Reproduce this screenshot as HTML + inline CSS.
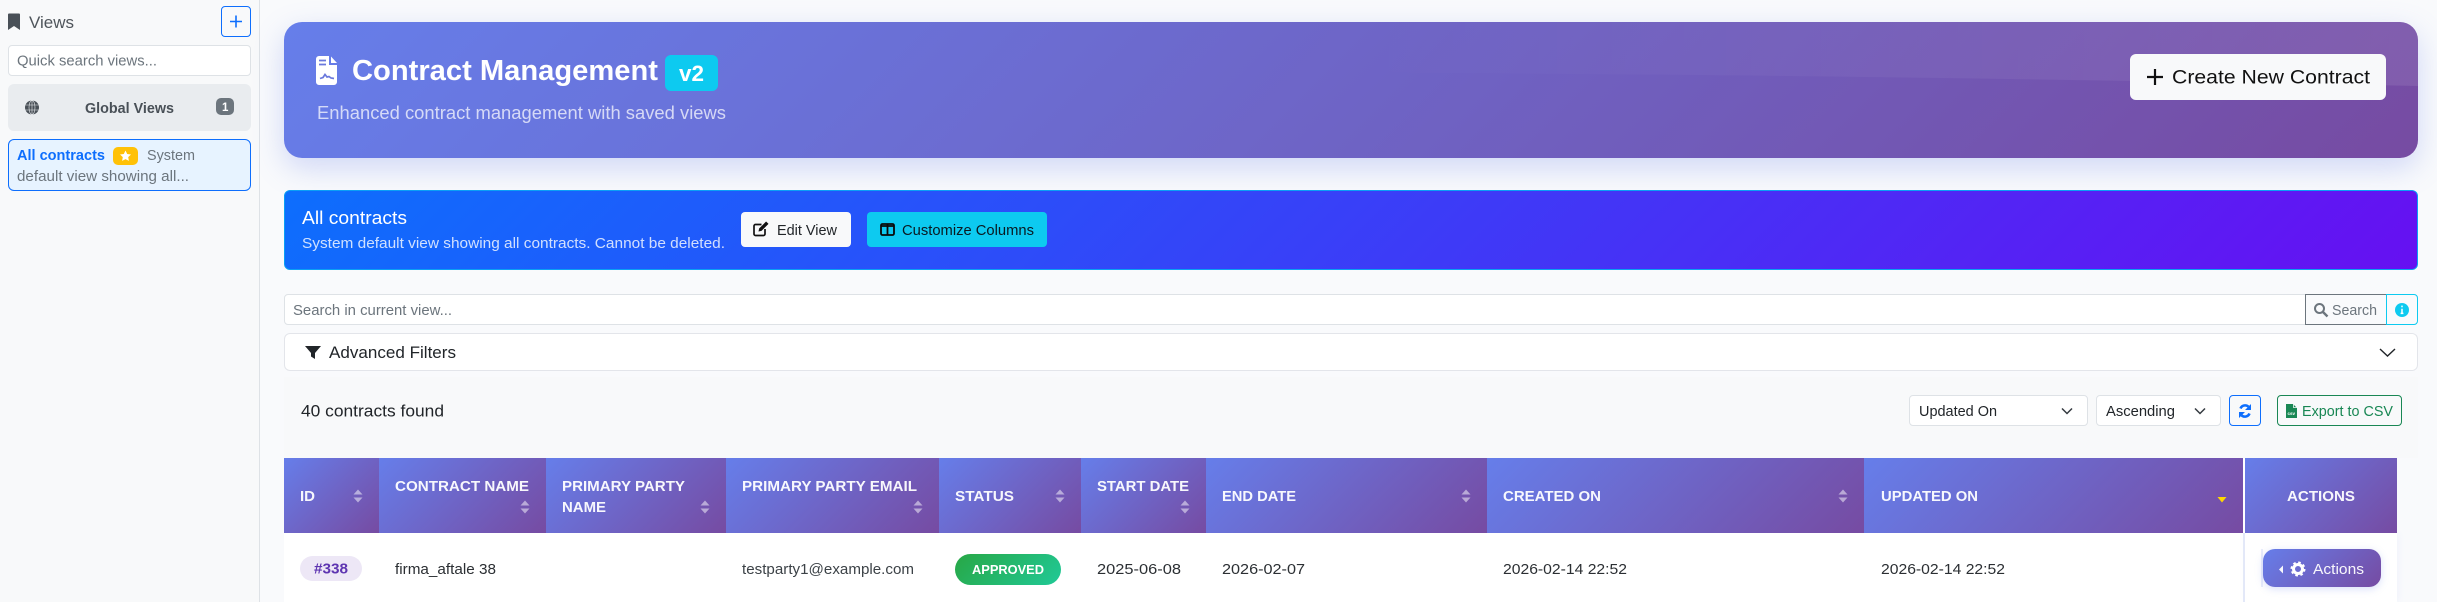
<!DOCTYPE html>
<html><head><meta charset="utf-8"><title>Contract Management</title>
<style>
*{box-sizing:border-box}
html,body{margin:0;padding:0;width:2437px;height:602px;overflow:hidden;background:#f9fafc;font-family:"Liberation Sans",sans-serif}
.b{position:absolute}
.th{position:absolute;top:458px;height:75px;background:linear-gradient(135deg,#667eea,#764ba2)}
svg.o{position:absolute;left:0;top:0}
</style></head><body>
<div class="b" style="left:0;top:0;width:260px;height:602px;background:#f8f9fa;border-right:1px solid #dee2e6"></div>
<div class="b" style="left:221px;top:6px;width:30px;height:31px;border:1px solid #0d6efd;border-radius:4px"></div>
<div class="b" style="left:8px;top:45px;width:243px;height:31px;background:#fff;border:1px solid #dee2e6;border-radius:4px"></div>
<div class="b" style="left:8px;top:84px;width:243px;height:47px;background:#e9ecef;border-radius:6px"></div>
<div class="b" style="left:216px;top:98px;width:18px;height:17px;background:#6c757d;border-radius:5px"></div>
<div class="b" style="left:8px;top:139px;width:243px;height:52px;background:#e7f3ff;border:1px solid #0d6efd;border-radius:6px"></div>
<div class="b" style="left:113px;top:147px;width:25px;height:18px;background:#ffc107;border-radius:5px"></div>

<div class="b" style="left:284px;top:22px;width:2134px;height:136px;border-radius:18px;box-shadow:0 10px 30px rgba(102,126,234,.28)"></div>
<div class="b" style="left:284px;top:22px;width:2134px;height:136px;border-radius:18px;overflow:hidden;background:linear-gradient(135deg,#667eea,#764ba2)">
<svg width="2134" height="136" style="position:absolute;left:0;top:0"><defs><linearGradient id="w" x1="0" x2="1" y1="0" y2="0"><stop offset="0" stop-color="#fff" stop-opacity="0"/><stop offset=".5" stop-color="#fff" stop-opacity="0"/><stop offset="1" stop-color="#fff" stop-opacity=".09"/></linearGradient></defs>
<path d="M0 0H2134V64C1900 59.500 1650 55.500 1416 53C1100 50 600 48 0 48Z" fill="url(#w)"/></svg></div>
<div class="b" style="left:665px;top:55px;width:53px;height:36px;background:#0dcaf0;border-radius:6px"></div>
<div class="b" style="left:2130px;top:54px;width:256px;height:46px;background:#f8f9fa;border-radius:6px"></div>

<div class="b" style="left:284px;top:190px;width:2134px;height:80px;background:linear-gradient(135deg,#0d6efd,#6610f2);border:1px solid #0a9ff5;border-radius:6px"></div>
<div class="b" style="left:741px;top:212px;width:110px;height:35px;background:#f8f9fa;border-radius:4px"></div>
<div class="b" style="left:867px;top:212px;width:180px;height:35px;background:#0dcaf0;border-radius:4px"></div>

<div class="b" style="left:284px;top:294px;width:2022px;height:31px;background:#fff;border:1px solid #dee2e6;border-radius:4px 0 0 4px"></div>
<div class="b" style="left:2305px;top:294px;width:82px;height:31px;border:1px solid #6c757d"></div>
<div class="b" style="left:2386px;top:294px;width:32px;height:31px;border:1px solid #0dcaf0;border-radius:0 4px 4px 0"></div>
<div class="b" style="left:284px;top:333px;width:2134px;height:38px;background:#fff;border:1px solid #e3e5ea;border-radius:6px"></div>

<div class="b" style="left:284px;top:377px;width:2134px;height:81px;background:#f8f9fa"></div>
<div class="b" style="left:1909px;top:395px;width:179px;height:31px;background:#fff;border:1px solid #dee2e6;border-radius:4px"></div>
<div class="b" style="left:2096px;top:395px;width:125px;height:31px;background:#fff;border:1px solid #dee2e6;border-radius:4px"></div>
<div class="b" style="left:2229px;top:395px;width:32px;height:31px;border:1px solid #0d6efd;border-radius:4px"></div>
<div class="b" style="left:2277px;top:395px;width:125px;height:31px;border:1px solid #198754;border-radius:4px"></div>

<div class="b" style="left:284px;top:533px;width:1959px;height:69px;background:#fff"></div>
<div class="b" style="left:2243px;top:533px;width:154px;height:69px;background:#fff;border-left:2px solid #e3e8f8;box-shadow:2px 0 6px rgba(102,126,234,.05)"></div>
<div class="th" style="left:284px;width:95px"></div>
<div class="th" style="left:379px;width:167px"></div>
<div class="th" style="left:546px;width:180px"></div>
<div class="th" style="left:726px;width:213px"></div>
<div class="th" style="left:939px;width:142px"></div>
<div class="th" style="left:1081px;width:125px"></div>
<div class="th" style="left:1206px;width:281px"></div>
<div class="th" style="left:1487px;width:377px"></div>
<div class="th" style="left:1864px;width:379px"></div>
<div class="b" style="left:2243px;top:458px;width:2px;height:75px;background:#fff"></div>
<div class="th" style="left:2245px;width:152px"></div>

<div class="b" style="left:300px;top:556px;width:62px;height:25px;background:#ede7f6;border-radius:13px"></div>
<div class="b" style="left:955px;top:554px;width:106px;height:31px;background:linear-gradient(135deg,#28a745,#20c997);border-radius:16px"></div>
<div class="b" style="left:2261px;top:549px;width:2px;height:38px;background:#e9edfb"></div>
<div class="b" style="left:2263px;top:549px;width:118px;height:38px;background:linear-gradient(135deg,#667eea,#764ba2);border-radius:12px;box-shadow:0 2px 8px rgba(102,126,234,.25)"></div>

<svg class="o" width="2437" height="602" viewBox="0 0 2437 602" font-family="'Liberation Sans',sans-serif">
<!-- sidebar -->
<path d="M8 14.500a1 1 0 0 1 1-1h10a1 1 0 0 1 1 1V30l-6-4-6 4z" fill="#495057"/>
<text x="29" y="28" font-size="16.500" fill="#4f555b" textLength="45" lengthAdjust="spacingAndGlyphs">Views</text>
<path d="M236 15.500v12M230 21.500h12" stroke="#0d6efd" stroke-width="1.600" fill="none"/>
<text x="17" y="65.500" font-size="14.500" fill="#6c757d" textLength="140" lengthAdjust="spacingAndGlyphs">Quick search views...</text>
<circle cx="32" cy="107.500" r="7" fill="#495057"/>
<path d="M25 105h14M25 110h14M32 100.500v14" stroke="#e9ecef" stroke-width=".6" fill="none"/>
<ellipse cx="32" cy="107.500" rx="3" ry="7" fill="none" stroke="#e9ecef" stroke-width=".6"/>
<text x="85" y="113" font-size="14.500" font-weight="700" fill="#495057" textLength="89" lengthAdjust="spacingAndGlyphs">Global Views</text>
<text x="222" y="111" font-size="11.500" font-weight="700" fill="#fff">1</text>
<text x="17" y="160" font-size="14.500" font-weight="700" fill="#0d6efd" textLength="88" lengthAdjust="spacingAndGlyphs">All contracts</text>
<path d="M125.500 150.500l1.700 3.500 3.800.5-2.800 2.600.7 3.800-3.400-1.800-3.400 1.800.7-3.800-2.800-2.600 3.800-.5z" fill="#fff"/>
<text x="147" y="160" font-size="14.500" fill="#6c757d" textLength="48" lengthAdjust="spacingAndGlyphs">System</text>
<text x="17" y="181" font-size="14.500" fill="#6c757d" textLength="172" lengthAdjust="spacingAndGlyphs">default view showing all...</text>
<!-- hero -->
<path d="M319 56h10v9h8v17a3 3 0 0 1-3 3h-15a3 3 0 0 1-3-3V59a3 3 0 0 1 3-3z" fill="#fff"/>
<path d="M331 56.500l6 6.500h-6z" fill="#fff"/>
<path d="M319 60.500h7M319 64.500h7" stroke="#6a78dc" stroke-width="1.800"/>
<path d="M320 78.500l3-1 2-3 2 2.500 2-.5 2 1.500 3 .5" stroke="#6a78dc" stroke-width="1.700" fill="none"/>
<text x="352" y="80" font-size="28.500" font-weight="700" fill="#fff" textLength="306" lengthAdjust="spacingAndGlyphs">Contract Management</text>
<text x="679" y="81" font-size="22" font-weight="700" fill="#fff" textLength="25" lengthAdjust="spacingAndGlyphs">v2</text>
<text x="317" y="119" font-size="18.500" fill="#fff" fill-opacity=".72" textLength="409" lengthAdjust="spacingAndGlyphs">Enhanced contract management with saved views</text>
<path d="M2155 69v16M2147 77h16" stroke="#111" stroke-width="2.200" fill="none"/>
<text x="2172" y="83.500" font-size="19.500" fill="#111" textLength="198" lengthAdjust="spacingAndGlyphs">Create New Contract</text>
<!-- bar -->
<text x="302" y="224" font-size="18.500" fill="#fff" textLength="105" lengthAdjust="spacingAndGlyphs">All contracts</text>
<text x="302" y="248" font-size="14.500" fill="#fff" fill-opacity=".8" textLength="423" lengthAdjust="spacingAndGlyphs">System default view showing all contracts. Cannot be deleted.</text>
<path d="M765 229v5a1.500 1.500 0 0 1-1.500 1.500h-8a1.500 1.500 0 0 1-1.500-1.500v-8a1.500 1.500 0 0 1 1.500-1.500h6" fill="none" stroke="#111" stroke-width="1.700"/>
<path d="M758.500 231.500l.6-3 7-7 2.400 2.400-7 7z" fill="#111"/>
<text x="777" y="235" font-size="14.500" fill="#212529" textLength="60" lengthAdjust="spacingAndGlyphs">Edit View</text>
<rect x="881" y="224" width="13" height="11" rx="1.500" fill="none" stroke="#0a0a0a" stroke-width="1.800"/>
<path d="M887.500 224v11M881 226h13" stroke="#0a0a0a" stroke-width="1.800"/>
<text x="902" y="235" font-size="14.500" fill="#0a1a22" textLength="132" lengthAdjust="spacingAndGlyphs">Customize Columns</text>
<!-- search -->
<text x="293" y="315" font-size="14.500" fill="#6c757d" textLength="159" lengthAdjust="spacingAndGlyphs">Search in current view...</text>
<circle cx="2319.500" cy="308.500" r="4.500" fill="none" stroke="#6c757d" stroke-width="2"/>
<path d="M2323 312l4.500 4.500" stroke="#6c757d" stroke-width="2.400"/>
<text x="2332" y="315" font-size="14.500" fill="#6c757d" textLength="45" lengthAdjust="spacingAndGlyphs">Search</text>
<circle cx="2402" cy="310" r="7" fill="#0dcaf0"/>
<path d="M2402 305.600v1.600M2402 308.800v4.400M2400.600 313.400h2.800" stroke="#fff" stroke-width="1.500"/>
<!-- filters -->
<path d="M305 346h16l-6 7v6l-4-2.500V353z" fill="#212529"/>
<text x="329" y="358" font-size="16.500" fill="#212529" textLength="127" lengthAdjust="spacingAndGlyphs">Advanced Filters</text>
<path d="M2380 349l7.500 7 7.500-7" fill="none" stroke="#212529" stroke-width="1.400"/>
<!-- results -->
<text x="301" y="416.500" font-size="16.500" fill="#212529" textLength="143" lengthAdjust="spacingAndGlyphs">40 contracts found</text>
<text x="1919" y="416" font-size="14.500" fill="#212529" textLength="78" lengthAdjust="spacingAndGlyphs">Updated On</text>
<path d="M2062 408.500l5 5 5-5" fill="none" stroke="#343a40" stroke-width="1.500"/>
<text x="2106" y="416" font-size="14.500" fill="#212529" textLength="69" lengthAdjust="spacingAndGlyphs">Ascending</text>
<path d="M2195 408.500l5 5 5-5" fill="none" stroke="#343a40" stroke-width="1.500"/>
<path d="M2240.500 408.500a5 5 0 0 1 8-1.800M2249.500 413.500a5 5 0 0 1-8 1.800" fill="none" stroke="#0d6efd" stroke-width="2.600"/>
<path d="M2251 404v6h-6zM2239 418v-6h6z" fill="#0d6efd"/>
<path d="M2286 404h7l4 4v10h-11z" fill="#198754"/>
<path d="M2293.500 404v3.500h3.500" stroke="#f8f9fa" stroke-width=".8" fill="none"/>
<text x="2287.500" y="415" font-size="4.500" font-weight="700" fill="#fff">csv</text>
<text x="2302" y="416" font-size="14.500" fill="#198754" textLength="91" lengthAdjust="spacingAndGlyphs">Export to CSV</text>
<!-- table head -->
<g font-size="14.500" font-weight="700" fill="#fff" fill-opacity=".95">
<text x="300" y="501" textLength="15" lengthAdjust="spacingAndGlyphs">ID</text>
<text x="395" y="491" textLength="134" lengthAdjust="spacingAndGlyphs">CONTRACT NAME</text>
<text x="562" y="491" textLength="123" lengthAdjust="spacingAndGlyphs">PRIMARY PARTY</text>
<text x="562" y="512" textLength="44" lengthAdjust="spacingAndGlyphs">NAME</text>
<text x="742" y="491" textLength="175" lengthAdjust="spacingAndGlyphs">PRIMARY PARTY EMAIL</text>
<text x="955" y="501" textLength="59" lengthAdjust="spacingAndGlyphs">STATUS</text>
<text x="1097" y="491" textLength="92" lengthAdjust="spacingAndGlyphs">START DATE</text>
<text x="1222" y="501" textLength="74" lengthAdjust="spacingAndGlyphs">END DATE</text>
<text x="1503" y="501" textLength="98" lengthAdjust="spacingAndGlyphs">CREATED ON</text>
<text x="1881" y="501" textLength="97" lengthAdjust="spacingAndGlyphs">UPDATED ON</text>
<text x="2287" y="501" textLength="68" lengthAdjust="spacingAndGlyphs">ACTIONS</text>
</g>
<g fill="#fff" fill-opacity=".5">
<path d="M358 489.500l4.500 5h-9zM358 502.500l4.500-5h-9z"/>
<path d="M525 500.500l4.500 5h-9zM525 513.500l4.500-5h-9z"/>
<path d="M705 500.500l4.500 5h-9zM705 513.500l4.500-5h-9z"/>
<path d="M918 500.500l4.500 5h-9zM918 513.500l4.500-5h-9z"/>
<path d="M1060 489.500l4.500 5h-9zM1060 502.500l4.500-5h-9z"/>
<path d="M1185 500.500l4.500 5h-9zM1185 513.500l4.500-5h-9z"/>
<path d="M1466 489.500l4.500 5h-9zM1466 502.500l4.500-5h-9z"/>
<path d="M1843 489.500l4.500 5h-9zM1843 502.500l4.500-5h-9z"/>
</g>
<path d="M2217.500 497h9l-4.500 5.500z" fill="#ffd700"/>
<!-- row -->
<text x="314" y="573.500" font-size="14.500" font-weight="700" fill="#5e35b1" textLength="34" lengthAdjust="spacingAndGlyphs">#338</text>
<g font-size="14.500" fill="#2b2f33">
<text x="395" y="574" textLength="101" lengthAdjust="spacingAndGlyphs">firma_aftale 38</text>
<text x="742" y="574" textLength="172" lengthAdjust="spacingAndGlyphs" fill="#3c4247">testparty1@example.com</text>
<text x="1097" y="574" textLength="84" lengthAdjust="spacingAndGlyphs">2025-06-08</text>
<text x="1222" y="574" textLength="83" lengthAdjust="spacingAndGlyphs">2026-02-07</text>
<text x="1503" y="574" textLength="124" lengthAdjust="spacingAndGlyphs">2026-02-14 22:52</text>
<text x="1881" y="574" textLength="124" lengthAdjust="spacingAndGlyphs">2026-02-14 22:52</text>
</g>
<text x="972" y="574" font-size="12.500" font-weight="700" fill="#fff" textLength="72" lengthAdjust="spacingAndGlyphs">APPROVED</text>
<path d="M2283 565.500v8l-4-4z" fill="#fff" fill-opacity=".95"/>
<circle cx="2298" cy="569" r="4.500" fill="none" stroke="#fff" stroke-width="3"/>
<circle cx="2298" cy="569" r="6.500" fill="none" stroke="#fff" stroke-width="2" stroke-dasharray="2.600 2.500"/>
<text x="2313" y="574" font-size="14.500" fill="#fff" fill-opacity=".95" textLength="51" lengthAdjust="spacingAndGlyphs">Actions</text>
</svg>
</body></html>
